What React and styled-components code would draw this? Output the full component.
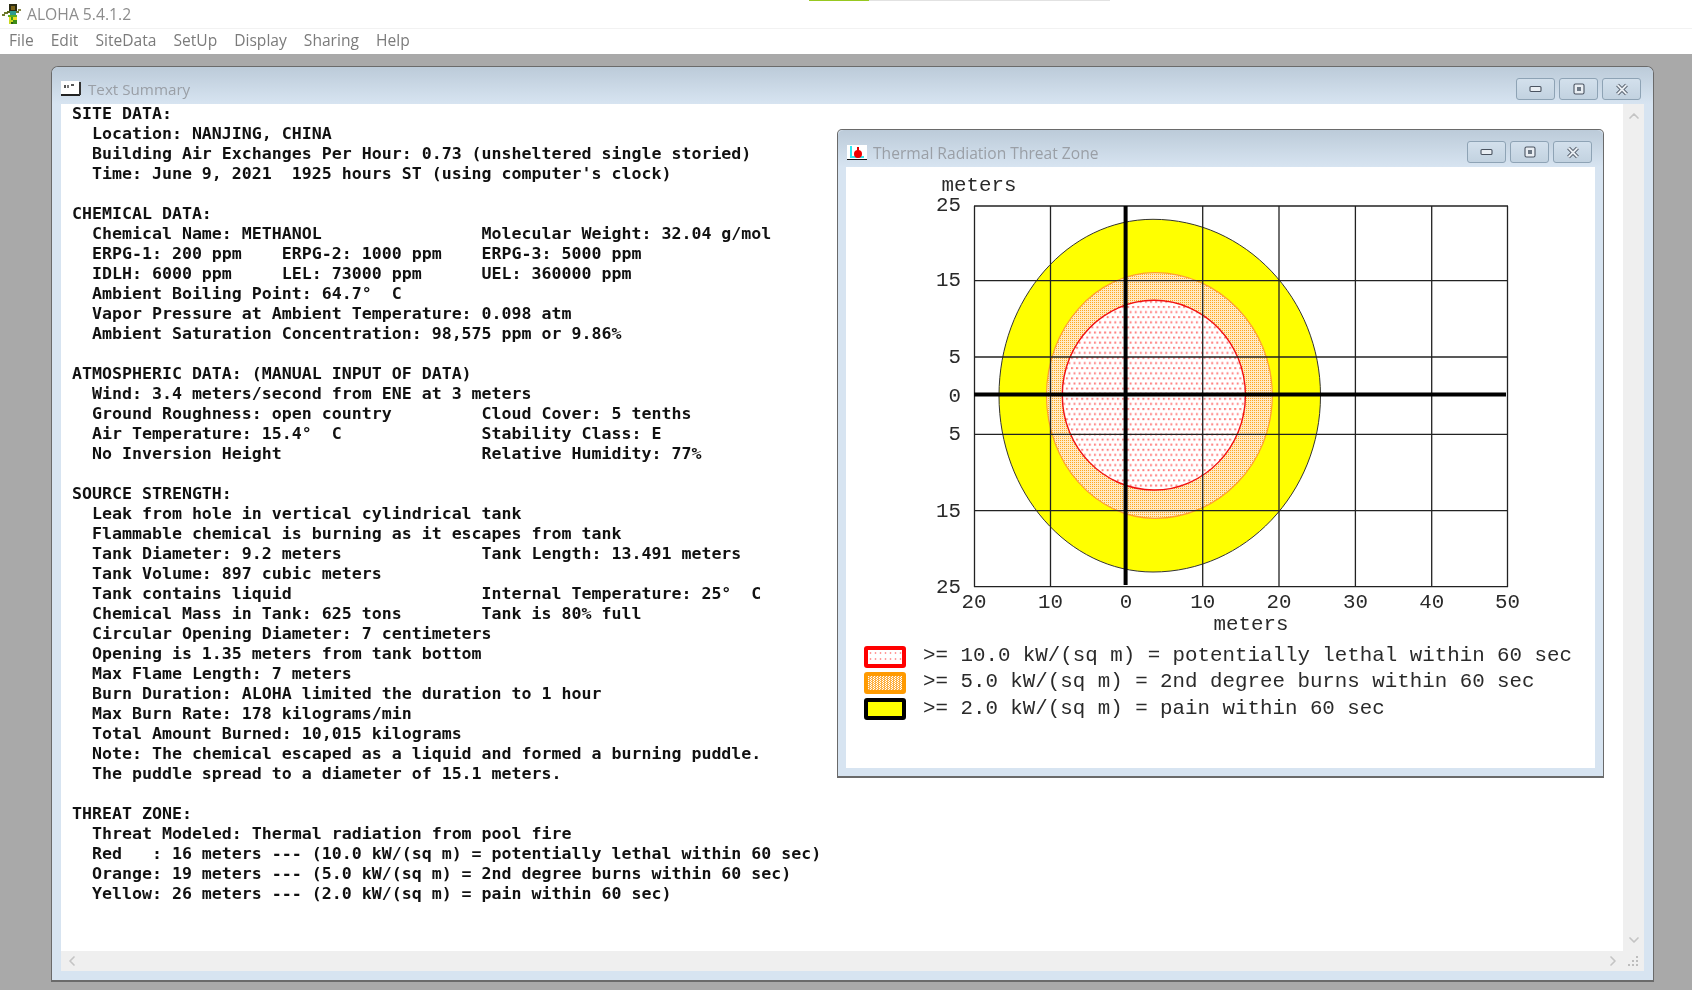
import React from 'react';
import styled, { createGlobalStyle } from 'styled-components';
import { ChevronUp, ChevronDown, ChevronLeft, ChevronRight } from 'lucide-react';

const UI_FONT = `"Open Sans", "Noto Sans", sans-serif`;

const MENU_ITEMS = ['File', 'Edit', 'SiteData', 'SetUp', 'Display', 'Sharing', 'Help'];

// two column rows in the report start the right column at char 41
const row = (left, right) => left.padEnd(41) + right;

const SUMMARY = [
  'SITE DATA:',
  '  Location: NANJING, CHINA',
  '  Building Air Exchanges Per Hour: 0.73 (unsheltered single storied)',
  "  Time: June 9, 2021  1925 hours ST (using computer's clock)",
  '',
  'CHEMICAL DATA:',
  row('  Chemical Name: METHANOL', 'Molecular Weight: 32.04 g/mol'),
  row('  ERPG-1: 200 ppm    ERPG-2: 1000 ppm', 'ERPG-3: 5000 ppm'),
  row('  IDLH: 6000 ppm     LEL: 73000 ppm', 'UEL: 360000 ppm'),
  '  Ambient Boiling Point: 64.7°  C',
  '  Vapor Pressure at Ambient Temperature: 0.098 atm',
  '  Ambient Saturation Concentration: 98,575 ppm or 9.86%',
  '',
  'ATMOSPHERIC DATA: (MANUAL INPUT OF DATA)',
  '  Wind: 3.4 meters/second from ENE at 3 meters',
  row('  Ground Roughness: open country', 'Cloud Cover: 5 tenths'),
  row('  Air Temperature: 15.4°  C', 'Stability Class: E'),
  row('  No Inversion Height', 'Relative Humidity: 77%'),
  '',
  'SOURCE STRENGTH:',
  '  Leak from hole in vertical cylindrical tank',
  '  Flammable chemical is burning as it escapes from tank',
  row('  Tank Diameter: 9.2 meters', 'Tank Length: 13.491 meters'),
  '  Tank Volume: 897 cubic meters',
  row('  Tank contains liquid', 'Internal Temperature: 25°  C'),
  row('  Chemical Mass in Tank: 625 tons', 'Tank is 80% full'),
  '  Circular Opening Diameter: 7 centimeters',
  '  Opening is 1.35 meters from tank bottom',
  '  Max Flame Length: 7 meters',
  '  Burn Duration: ALOHA limited the duration to 1 hour',
  '  Max Burn Rate: 178 kilograms/min',
  '  Total Amount Burned: 10,015 kilograms',
  '  Note: The chemical escaped as a liquid and formed a burning puddle.',
  '  The puddle spread to a diameter of 15.1 meters.',
  '',
  'THREAT ZONE:',
  '  Threat Modeled: Thermal radiation from pool fire',
  '  Red   : 16 meters --- (10.0 kW/(sq m) = potentially lethal within 60 sec)',
  '  Orange: 19 meters --- (5.0 kW/(sq m) = 2nd degree burns within 60 sec)',
  '  Yellow: 26 meters --- (2.0 kW/(sq m) = pain within 60 sec)',
].join('\n');

const LEGEND = [
  { kind: 'red', text: '>= 10.0 kW/(sq m) = potentially lethal within 60 sec' },
  { kind: 'orange', text: '>= 5.0 kW/(sq m) = 2nd degree burns within 60 sec' },
  { kind: 'yellow', text: '>= 2.0 kW/(sq m) = pain within 60 sec' },
];

const GRID_X = [974.5, 1050.5, 1202.7, 1279, 1355.4, 1431.7, 1507.5];
const GRID_Y = [206, 280.7, 357, 434.3, 510.7, 586.7];
const X_LABELS = [
  [974, '20'], [1050.5, '10'], [1126, '0'], [1202.7, '10'],
  [1279, '20'], [1355.4, '30'], [1431.7, '40'], [1507.5, '50'],
];
const Y_LABELS = [
  [205, '25'], [280, '15'], [356.7, '5'], [395.7, '0'],
  [434, '5'], [510.7, '15'], [586.7, '25'],
];

// threat zones are slightly egg shaped: apex sits left of the middle
const eggPath = (left, right, apex, top, bottom) => {
  const cy = (top + bottom) / 2;
  const k = 0.55;
  const ky = (bottom - top) * 0.5 * k;
  const kl = (apex - left) * k;
  const kr = (right - apex) * k;
  return [
    `M${left} ${cy}`,
    `C${left} ${cy - ky} ${apex - kl} ${top} ${apex} ${top}`,
    `C${apex + kr} ${top} ${right} ${cy - ky} ${right} ${cy}`,
    `C${right} ${cy + ky} ${apex + kr} ${bottom} ${apex} ${bottom}`,
    `C${apex - kl} ${bottom} ${left} ${cy + ky} ${left} ${cy}Z`,
  ].join(' ');
};

const GlobalStyle = createGlobalStyle`
  html, body {
    margin: 0;
    padding: 0;
    overflow: hidden;
    background: #a9a9a9;
  }
`;

// the source screenshot is an upscaled capture, everything is a little soft
const Page = styled.div`
  width: 1692px;
  height: 990px;
  display: flex;
  flex-direction: column;
  position: relative;
  font-family: ${UI_FONT};
  filter: blur(0.35px);
`;

const Progress = styled.div`
  position: absolute;
  top: 0;
  left: 809px;
  width: 301px;
  height: 1px;
  background: linear-gradient(to right, #97c820 60px, #e2e2e2 60px);
`;

const AppTitle = styled.div`
  height: 29px;
  display: flex;
  align-items: center;
  gap: 5px;
  padding-left: 2px;
  background: #fff;
  border-bottom: 1px solid #f2f2f2;
  box-sizing: border-box;
  font-size: 15.7px;
  color: #8c8c8c;
`;

const MenuBar = styled.div`
  height: 25px;
  display: flex;
  align-items: center;
  gap: 17px;
  padding: 0 0 3px 9px;
  box-sizing: border-box;
  background: #fff;
  font-size: 15.6px;
  color: #7b7b7b;
  box-shadow: 0 1px 1px #e4e4e4;
`;

const Desktop = styled.div`
  flex: 1;
  min-height: 0;
  padding: 12px 38px 8px 51px;
  background: #a9a9a9;
`;

const Frame = styled.div`
  height: 100%;
  box-sizing: border-box;
  display: flex;
  flex-direction: column;
  background: #d7e4f1;
  border: 1px solid #6a6a6a;
  border-bottom-width: 2px;
  border-radius: 7px 7px 0 0;
`;

const FloatingFrame = styled(Frame)`
  position: absolute;
  left: 776px;
  top: 25px;
  width: 767px;
  height: 649px;
  border-radius: 5px 5px 0 0;
`;

const TitleRow = styled.div`
  height: 37px;
  flex: none;
  display: flex;
  align-items: flex-end;
  justify-content: space-between;
  padding: 0 ${(p) => p.$right}px 4px 9px;
  box-sizing: border-box;
  background: linear-gradient(#bccbd9, #d7e4f1);
  border-radius: 6px 6px 0 0;
`;

const TitleLeft = styled.div`
  display: flex;
  align-items: center;
  gap: ${(p) => p.$gap}px;
  font-size: ${(p) => p.$size}px;
  color: #9a9fa6;
  line-height: 20px;
  margin-bottom: ${(p) => p.$lift}px;
`;

const ButtonGroup = styled.div`
  display: flex;
  gap: 4px;
`;

const WinButton = styled.div`
  width: 39px;
  height: 22px;
  box-sizing: border-box;
  display: flex;
  align-items: center;
  justify-content: center;
  border: 1px solid #8ea3b5;
  border-radius: 3px;
  background: linear-gradient(#d3e0ec, #c2d2e0);
`;

const FrameBody = styled.div`
  flex: 1;
  min-height: 0;
  position: relative;
  display: grid;
  grid-template-columns: 1fr 21px;
  grid-template-rows: 1fr 20px;
  margin: 0 9px 9px;
  background: #efefef;
`;

const TextArea = styled.pre`
  margin: 0;
  padding: 0 0 0 11px;
  background: #fff;
  overflow: hidden;
  font-family: "DejaVu Sans Mono", "Liberation Mono", monospace;
  font-weight: 700;
  font-size: 16.6px;
  line-height: 20px;
  color: #111;
`;

const VScroll = styled.div`
  display: flex;
  flex-direction: column;
  align-items: center;
  justify-content: space-between;
  padding: 4px 0 3px;
  color: #c4c4c4;
`;

const HScroll = styled.div`
  display: flex;
  align-items: center;
  justify-content: space-between;
  padding: 0 2px 0 3px;
  color: #c4c4c4;
`;

const Grip = styled.div`
  display: flex;
  align-items: center;
  justify-content: center;
`;

const ChartBody = styled.div`
  flex: 1;
  margin: 0 8px 8px;
  background: #fff;
  display: flex;
  flex-direction: column;
`;

const ChartSvg = styled.svg`
  display: block;
  width: 748px;
  height: 474px;
  flex: none;

  text {
    font-family: "Liberation Mono", "Courier New", monospace;
    font-size: 20.8px;
    fill: #2a2a2a;
  }
`;

const Legend = styled.div`
  display: flex;
  flex-direction: column;
  gap: 4px;
  padding: 5px 0 0 18px;
`;

const LegendRow = styled.div`
  display: flex;
  align-items: center;
  gap: 17px;
  height: 22px;
  font-family: "Liberation Mono", "Courier New", monospace;
  font-size: 20.8px;
  color: #2a2a2a;
  white-space: pre;
`;

const LegendText = styled.span`
  margin-top: ${(p) => p.$lift}px;
`;

const SWATCH = {
  red: {
    border: '#ff0000',
    fill: 'radial-gradient(circle, #ff9a9a 0.8px, #fff 1.2px) 0 0 / 5px 6px',
    lift: -4,
  },
  orange: {
    border: '#ff9a00',
    fill: 'repeating-conic-gradient(#ffb040 0 25%, #fff 0 50%) 0 0 / 3px 2px',
    lift: -4,
  },
  yellow: { border: '#000', fill: '#ffff00', lift: -2 },
};

const Swatch = styled.div`
  width: 42px;
  height: 22px;
  flex: none;
  box-sizing: border-box;
  border: 4px solid ${(p) => SWATCH[p.$kind].border};
  border-radius: 3px;
  background: ${(p) => SWATCH[p.$kind].fill};
`;

const HulaIcon = () => (
  <svg width="20" height="21" viewBox="0 0 20 21" shapeRendering="crispEdges">
    <rect x="7" y="0" width="8" height="7" fill="#2b2b12" />
    <rect x="9" y="2" width="4" height="4" fill="#7a6418" />
    <rect x="0" y="10" width="3" height="2" fill="#6f7a2c" />
    <rect x="2" y="8" width="4" height="2" fill="#6f7a2c" />
    <rect x="5" y="7" width="4" height="2" fill="#5a6a1c" />
    <rect x="13" y="7" width="4" height="2" fill="#6f7a2c" />
    <rect x="16" y="5" width="3" height="2" fill="#8a8a4c" />
    <rect x="8" y="7" width="6" height="4" fill="#2e9c8c" />
    <rect x="6" y="11" width="9" height="2" fill="#5cae20" />
    <rect x="7" y="13" width="8" height="3" fill="#e8e020" />
    <rect x="9" y="13" width="2" height="3" fill="#3c9c18" />
    <rect x="7" y="16" width="4" height="4" fill="#c8d820" />
    <rect x="11" y="16" width="4" height="4" fill="#3c8c18" />
    <rect x="9" y="18" width="2" height="2" fill="#2b5c10" />
  </svg>
);

const SummaryIcon = () => (
  <svg width="20" height="16" viewBox="0 0 20 16" shapeRendering="crispEdges">
    <rect x="0" y="0" width="18" height="13" fill="#fff" />
    <rect x="0" y="13" width="19" height="2" fill="#222" />
    <rect x="18" y="1" width="2" height="13" fill="#333" />
    <rect x="3" y="4" width="2" height="3" fill="#555" />
    <rect x="6" y="4" width="2" height="3" fill="#777" />
    <rect x="10" y="3" width="3" height="2" fill="#555" />
  </svg>
);

const ThreatIcon = () => (
  <svg width="20" height="16" viewBox="0 0 20 16" shapeRendering="crispEdges">
    <rect x="0" y="0" width="20" height="14" fill="#fff" />
    <rect x="3" y="1" width="2" height="12" fill="#30e8f0" />
    <rect x="3" y="11" width="14" height="2" fill="#30e8f0" />
    <rect x="0" y="14" width="20" height="1" fill="#111" />
    <rect x="10" y="2" width="2" height="5" fill="#e00000" />
    <circle cx="11" cy="9" r="4" fill="#f00000" shapeRendering="auto" />
  </svg>
);

const MinGlyph = () => (
  <svg width="13" height="8" viewBox="0 0 13 8">
    <rect x="1" y="1.5" width="11" height="5" rx="1" fill="#e9eef3" stroke="#4a5360" strokeWidth="1.1" />
  </svg>
);

const MaxGlyph = () => (
  <svg width="12" height="12" viewBox="0 0 12 12">
    <rect x="1" y="1" width="10" height="10" rx="1.5" fill="#e9eef3" stroke="#4a5360" strokeWidth="1.1" />
    <rect x="4" y="4" width="4" height="4" fill="#6c7784" />
  </svg>
);

const CloseGlyph = () => (
  <svg width="14" height="13" viewBox="0 0 14 13">
    <path d="M2.5 2L11.5 11M11.5 2L2.5 11" stroke="#4a5360" strokeWidth="3.8" />
    <path d="M2.5 2L11.5 11M11.5 2L2.5 11" stroke="#e9eef3" strokeWidth="1.9" />
  </svg>
);

const GripGlyph = () => (
  <svg width="11" height="11" viewBox="0 0 11 11" shapeRendering="crispEdges" fill="#bdbdbd">
    <rect x="8" y="0" width="2" height="2" />
    <rect x="4" y="4" width="2" height="2" />
    <rect x="8" y="4" width="2" height="2" />
    <rect x="0" y="8" width="2" height="2" />
    <rect x="4" y="8" width="2" height="2" />
    <rect x="8" y="8" width="2" height="2" />
  </svg>
);

const WindowButtons = () => (
  <ButtonGroup>
    <WinButton><MinGlyph /></WinButton>
    <WinButton><MaxGlyph /></WinButton>
    <WinButton><CloseGlyph /></WinButton>
  </ButtonGroup>
);

const ThreatChart = () => (
  <ChartSvg viewBox="846 167 748 474">
    <defs>
      <pattern id="redDots" width="5.1" height="10.2" patternUnits="userSpaceOnUse">
        <rect width="5.1" height="10.2" fill="#fff" />
        <rect x="0" y="0" width="2" height="2" fill="#ff8080" />
        <rect x="2.5" y="5.1" width="2" height="2" fill="#ff8080" />
      </pattern>
      <pattern id="orangeDots" width="2" height="2" patternUnits="userSpaceOnUse">
        <rect width="2" height="2" fill="#ffeac4" />
        <rect width="1" height="1" fill="#ffa820" />
      </pattern>
    </defs>

    <path d={eggPath(999, 1320.5, 1153, 219.3, 572)} fill="#ffff00" stroke="#333" strokeWidth="1" />
    <path d={eggPath(1046.5, 1272.3, 1155, 272.7, 518.3)} fill="url(#orangeDots)" stroke="#ffa030" strokeWidth="1.2" />
    <path d={eggPath(1062.3, 1245.4, 1154, 300.3, 490)} fill="url(#redDots)" stroke="#f01010" strokeWidth="1.4" />

    {GRID_X.map((x) => (
      <line key={x} x1={x} y1="206" x2={x} y2="587" stroke="#222" strokeWidth="1.3" />
    ))}
    {GRID_Y.map((y) => (
      <line key={y} x1="974" y1={y} x2="1508" y2={y} stroke="#222" strokeWidth="1.3" />
    ))}
    <line x1="1125.6" y1="206" x2="1125.6" y2="585" stroke="#000" strokeWidth="4" />
    <line x1="974" y1="394.4" x2="1506" y2="394.4" stroke="#000" strokeWidth="4" />

    <text x="979" y="191" textAnchor="middle">meters</text>
    <text x="1251" y="630" textAnchor="middle">meters</text>
    {Y_LABELS.map(([y, label]) => (
      <text key={y} x="961" y={y + 6} textAnchor="end">{label}</text>
    ))}
    {X_LABELS.map(([x, label]) => (
      <text key={x} x={x} y="608" textAnchor="middle">{label}</text>
    ))}
  </ChartSvg>
);

const App = () => (
  <Page>
    <GlobalStyle />
    <Progress />
    <AppTitle>
      <HulaIcon />
      ALOHA 5.4.1.2
    </AppTitle>
    <MenuBar>
      {MENU_ITEMS.map((item) => (
        <span key={item}>{item}</span>
      ))}
    </MenuBar>
    <Desktop>
      <Frame>
        <TitleRow $right={12}>
          <TitleLeft $size={15.2} $gap={7} $lift={1}>
            <SummaryIcon />
            Text Summary
          </TitleLeft>
          <WindowButtons />
        </TitleRow>
        <FrameBody>
          <TextArea>{SUMMARY}</TextArea>
          <VScroll>
            <ChevronUp size={16} strokeWidth={2.5} />
            <ChevronDown size={16} strokeWidth={2.5} />
          </VScroll>
          <HScroll>
            <ChevronLeft size={16} strokeWidth={2.5} />
            <ChevronRight size={16} strokeWidth={2.5} />
          </HScroll>
          <Grip><GripGlyph /></Grip>
          <FloatingFrame>
            <TitleRow $right={11}>
              <TitleLeft $size={15.6} $gap={6} $lift={0}>
                <ThreatIcon />
                Thermal Radiation Threat Zone
              </TitleLeft>
              <WindowButtons />
            </TitleRow>
            <ChartBody>
              <ThreatChart />
              <Legend>
                {LEGEND.map(({ kind, text }) => (
                  <LegendRow key={kind}>
                    <Swatch $kind={kind} />
                    <LegendText $lift={SWATCH[kind].lift}>{text}</LegendText>
                  </LegendRow>
                ))}
              </Legend>
            </ChartBody>
          </FloatingFrame>
        </FrameBody>
      </Frame>
    </Desktop>
  </Page>
);

export default App;
